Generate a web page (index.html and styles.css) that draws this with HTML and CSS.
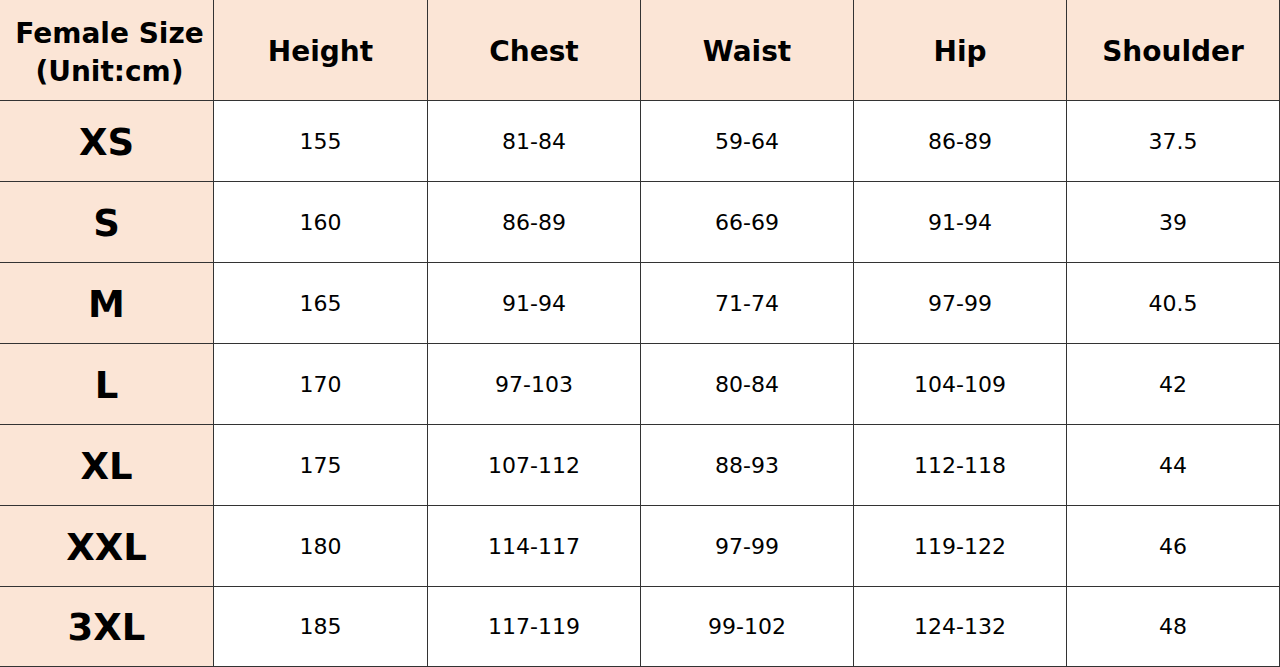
FILE: index.html
```html
<!DOCTYPE html>
<html>
<head>
<meta charset="utf-8">
<link rel="stylesheet" href="styles.css">
</head>
<body>
<div class="chart">
  <div class="cell head corner">Female Size<br>(Unit:cm)</div>
  <div class="cell head">Height</div>
  <div class="cell head">Chest</div>
  <div class="cell head">Waist</div>
  <div class="cell head">Hip</div>
  <div class="cell head">Shoulder</div>

  <div class="cell size">XS</div><div class="cell">155</div><div class="cell">81-84</div><div class="cell">59-64</div><div class="cell">86-89</div><div class="cell">37.5</div>
  <div class="cell size">S</div><div class="cell">160</div><div class="cell">86-89</div><div class="cell">66-69</div><div class="cell">91-94</div><div class="cell">39</div>
  <div class="cell size">M</div><div class="cell">165</div><div class="cell">91-94</div><div class="cell">71-74</div><div class="cell">97-99</div><div class="cell">40.5</div>
  <div class="cell size">L</div><div class="cell">170</div><div class="cell">97-103</div><div class="cell">80-84</div><div class="cell">104-109</div><div class="cell">42</div>
  <div class="cell size">XL</div><div class="cell">175</div><div class="cell">107-112</div><div class="cell">88-93</div><div class="cell">112-118</div><div class="cell">44</div>
  <div class="cell size">XXL</div><div class="cell">180</div><div class="cell">114-117</div><div class="cell">97-99</div><div class="cell">119-122</div><div class="cell">46</div>
  <div class="cell size">3XL</div><div class="cell">185</div><div class="cell">117-119</div><div class="cell">99-102</div><div class="cell">124-132</div><div class="cell">48</div>
</div>
</body>
</html>
```
FILE: styles.css
```css
html, body {
  margin: 0;
  padding: 0;
  background: #ffffff;
}
.chart {
  width: 1280px;
  height: 667px;
  display: grid;
  grid-template-columns: 214px 214px 213px 213px 213px 213px;
  grid-template-rows: 101px repeat(6, 81px) 80px;
  font-family: "DejaVu Sans", Verdana, sans-serif;
  color: #000;
}
.cell {
  display: flex;
  align-items: center;
  justify-content: center;
  text-align: center;
  border-right: 1px solid #333333;
  border-bottom: 1px solid #333333;
  font-size: 22px;
  background: #ffffff;
}
.head {
  background: #fbe5d6;
  font-weight: bold;
  font-size: 28px;
  padding-top: 3px;
}
.corner {
  line-height: 38px;
  padding-top: 6px;
  padding-left: 6px;
}
.size {
  background: #fbe5d6;
  font-weight: bold;
  font-size: 37px;
  padding-top: 2px;
}
```
